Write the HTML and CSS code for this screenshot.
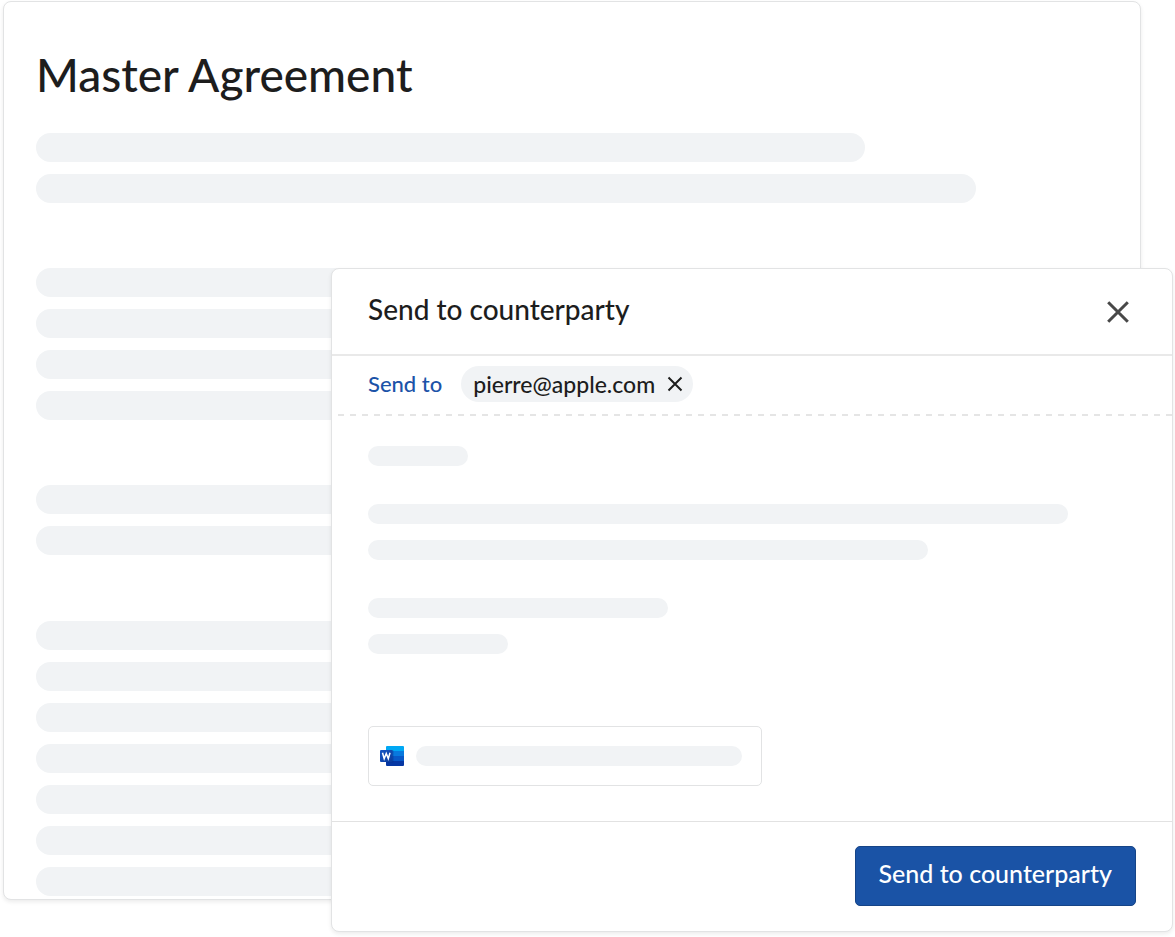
FILE: index.html
```html
<!DOCTYPE html>
<html lang="en">
<head>
<meta charset="utf-8">
<meta name="viewport" content="width=device-width, initial-scale=1">
<title>Master Agreement</title>
<link rel="stylesheet" href="styles.css">
</head>
<body>
<main class="stage">
  <article class="document">
    <h1 class="document-title">Master Agreement</h1>
    <div class="paragraphs" aria-hidden="true">
      <div class="paragraph">
        <div class="line regular"></div>
        <div class="line wide"></div>
      </div>
      <div class="paragraph">
        <div class="line widest"></div>
        <div class="line regular"></div>
        <div class="line wide"></div>
        <div class="line regular"></div>
      </div>
      <div class="paragraph">
        <div class="line regular"></div>
        <div class="line wide"></div>
      </div>
      <div class="paragraph">
        <div class="line regular"></div>
        <div class="line wide"></div>
        <div class="line regular"></div>
        <div class="line wide"></div>
        <div class="line regular"></div>
        <div class="line wide"></div>
        <div class="line regular"></div>
      </div>
    </div>
  </article>

  <section class="dialog" role="dialog" aria-labelledby="dialog-title">
    <header class="dialog-header">
      <h2 class="dialog-title" id="dialog-title">Send to counterparty</h2>
      <button class="icon-button close" type="button" aria-label="Close">
        <svg width="24" height="24" viewBox="0 0 24 24" fill="none" stroke="currentColor" stroke-width="3"><path d="M2.200 2.200 21.800 21.800M21.800 2.200 2.200 21.800"/></svg>
      </button>
    </header>

    <div class="recipients">
      <span class="recipients-label">Send to</span>
      <span class="chip">
        <span>pierre@apple.com</span>
        <button class="icon-button" type="button" aria-label="Remove pierre@apple.com">
          <svg width="16" height="16" viewBox="0 0 16 16" fill="none" stroke="currentColor" stroke-width="2"><path d="M1.500 1.500 14.500 14.500M14.500 1.500 1.500 14.500"/></svg>
        </button>
      </span>
    </div>
    <svg class="divider" width="100%" height="2" aria-hidden="true"><line x1="0" y1="1" x2="100%" y2="1" stroke="#e5e5e5" stroke-width="2" stroke-dasharray="6 6"/></svg>

    <div class="message">
      <div class="message-text" aria-hidden="true">
        <div class="message-block"><div class="bar greeting"></div></div>
        <div class="message-block">
          <div class="bar long"></div>
          <div class="bar medium"></div>
        </div>
        <div class="message-block">
          <div class="bar short"></div>
          <div class="bar signature"></div>
        </div>
      </div>
      <div class="attachment">
        <svg class="word-icon" width="24" height="20" viewBox="0 0 24 20" role="img" aria-label="Word document">
          <defs><linearGradient id="tile" x1="0" y1="0" x2="1" y2="1"><stop stop-color="#1857c4"/><stop offset="1" stop-color="#0a3b9c"/></linearGradient></defs>
          <path d="M7 0h16a1 1 0 0 1 1 1v4.500H6V1a1 1 0 0 1 1-1z" fill="#00a8f4"/>
          <path d="M6 5h18v5H6z" fill="#0879de"/>
          <path d="M6 10h18v5H6z" fill="#0859c8"/>
          <path d="M6 15h18v4a1 1 0 0 1-1 1H7a1 1 0 0 1-1-1z" fill="#0637a3"/>
          <path d="M6 4h6.500a1 1 0 0 1 1 1v10.500a1 1 0 0 1-1 1H6z" fill="#052c80" opacity=".35"/>
          <rect y="4" width="12.500" height="12" rx="1" fill="url(#tile)"/>
          <path d="M2.500 6.800 4.200 12.600 6.250 7.500 8.300 12.600 10 6.800" fill="none" stroke="#fff" stroke-width="1.500"/>
        </svg>
        <div class="bar file-name" aria-hidden="true"></div>
      </div>
    </div>

    <footer class="dialog-footer">
      <button class="primary" type="button">Send to counterparty</button>
    </footer>
  </section>
</main>
</body>
</html>
```
FILE: styles.css
```css
* { box-sizing: border-box; }

body {
  margin: 0;
  background: #fff;
  color: #1d1d1d;
  font-family: Lato, "Open Sans", sans-serif;
  font-weight: 500;
}

.stage {
  position: relative;
  padding: 1px 34px 38px 3px;
}

.document,
.dialog {
  background: #fff;
  border: 1px solid #e2e3e4;
  border-radius: 8px;
  box-shadow: 0 2px 4px rgba(0, 0, 0, 0.08);
}

.document { padding: 43px 32px 3px; }

.document-title {
  margin: 0 0 28px;
  font-size: 46px;
  line-height: 60px;
  font-weight: 500;
}

.paragraphs {
  display: grid;
  gap: 65px;
}

.paragraph {
  display: grid;
  gap: 12px;
}

.paragraph:last-child { padding-top: 1px; }

.line {
  height: 29px;
  border-radius: 15px;
  background: #f1f3f5;
}

.regular { width: 77.3%; }
.wide { width: 87.7%; }
.widest { width: 93%; }

.dialog {
  position: absolute;
  top: 268px;
  left: 331px;
  right: 2px;
}

.dialog-header {
  display: flex;
  align-items: center;
  justify-content: space-between;
  padding: 20px 42px 25px 36px;
  border-bottom: 2px solid #e9e9e9;
}

.dialog-title {
  margin: 0;
  font-size: 28px;
  line-height: 40px;
  font-weight: 500;
}

.icon-button {
  display: flex;
  padding: 0;
  border: 0;
  background: none;
  color: inherit;
  cursor: pointer;
}

.close {
  padding-top: 6px;
  color: #484848;
}

.recipients {
  display: flex;
  align-items: center;
  gap: 19px;
  padding: 10px 36px 12px;
  font-size: 22px;
  line-height: 36px;
}

.recipients-label { color: #1c53a8; }

.chip {
  display: flex;
  align-items: center;
  gap: 12px;
  padding: 0 10px 0 12px;
  border-radius: 18px;
  background: #f1f3f5;
  font-size: 23px;
}

.divider {
  display: block;
  padding-left: 6px;
}

.message { padding: 30px 36px 35px; }

.message-text,
.message-block {
  display: grid;
}

.message-text { gap: 38px; }
.message-block { gap: 16px; }

.bar {
  height: 20px;
  max-width: 100%;
  border-radius: 10px;
  background: #f1f3f5;
}

.greeting { width: 100px; }
.long { width: 700px; }
.medium { width: 560px; }
.short { width: 300px; }
.signature { width: 140px; }

.attachment {
  display: flex;
  align-items: center;
  gap: 12px;
  width: 394px;
  max-width: 100%;
  height: 60px;
  margin-top: 72px;
  padding: 0 19px 0 11px;
  border: 1px solid #e2e3e4;
  border-radius: 5px;
}

.word-icon { flex: none; }
.file-name { flex: 1; }

.dialog-footer {
  display: flex;
  justify-content: flex-end;
  padding: 24px 36px 25px;
  border-top: 1px solid #e2e2e2;
}

.primary {
  padding: 8px 23px 14px;
  border: 1px solid #164487;
  border-radius: 5px;
  background: #1a53a6;
  color: #fff;
  font-family: inherit;
  font-size: 25px;
  line-height: 36px;
  font-weight: 500;
  cursor: pointer;
}
```
